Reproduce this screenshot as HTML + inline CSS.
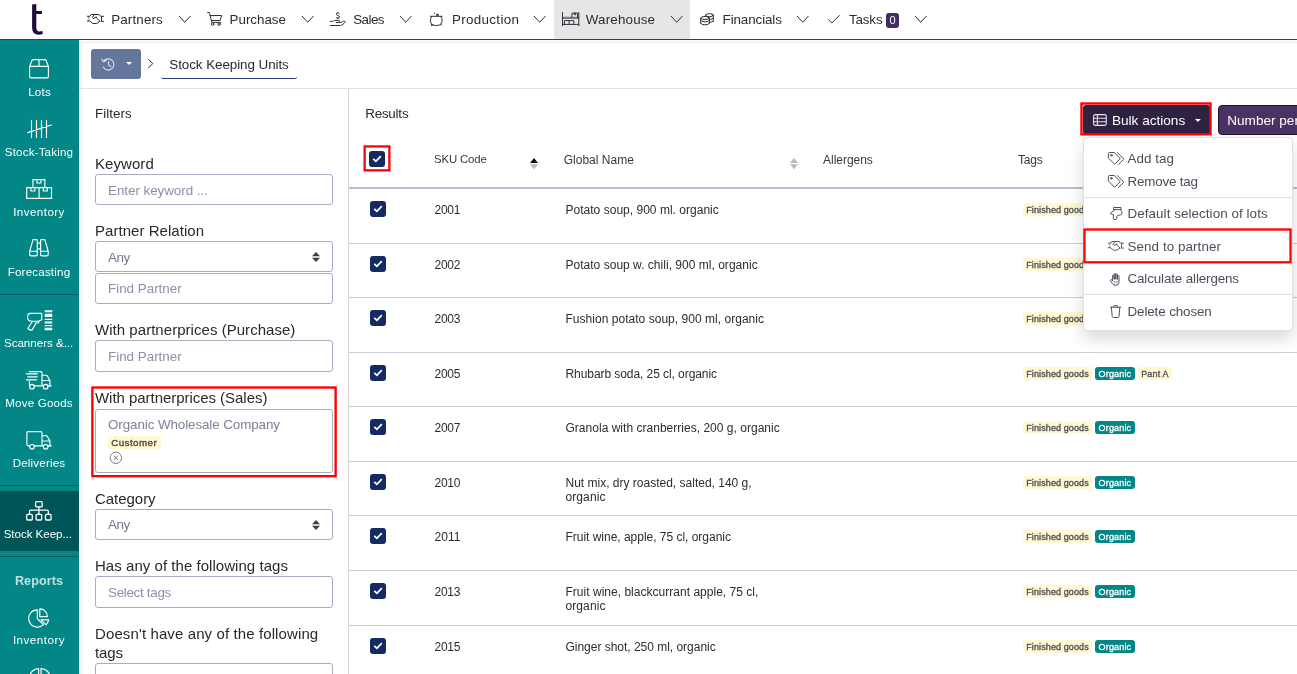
<!DOCTYPE html>
<html><head><meta charset="utf-8"><title>SKU</title>
<style>
*{box-sizing:border-box;margin:0;padding:0}
html,body{width:1297px;height:674px;overflow:hidden;background:#fff;font-family:"Liberation Sans",sans-serif;color:#2e2a33}
body{position:relative}
.a{position:absolute;white-space:nowrap}
svg{position:absolute;overflow:visible}
.ic{fill:none;stroke:#33303a;stroke-width:1;stroke-linecap:round;stroke-linejoin:round}
.iw{fill:none;stroke:#fff;stroke-width:1.15;stroke-linecap:round;stroke-linejoin:round}
.ig{fill:none;stroke:#4e505c;stroke-width:1;stroke-linecap:round;stroke-linejoin:round}
.nt{top:0;height:39px;line-height:39px;font-size:13.4px;color:#2e2b34}
.st{left:0;width:78px;text-align:center;color:#fff;font-size:11.6px;height:14px;line-height:14px}
.lbl{left:95px;font-size:15px;color:#2b2730;height:18px;line-height:18px}
.inp{left:95px;width:238px;height:31px;border:1px solid #a8acc0;border-radius:3px;background:#fff;font-size:13.4px;color:#8a90a7;line-height:29px;padding-left:12px}
.rb{left:349px;width:948px;height:1px;background:#cbced9}
.c{font-size:12px;color:#2e2a33;height:14px;line-height:14px}
.cb{width:16px;height:16px;border-radius:3px;background:#142a62}
.ty{height:13px;background:#fef9d2;border-radius:3px;font-size:9px;line-height:14.4px;color:#4c4b55;padding:0;text-align:center;font-weight:400;-webkit-text-stroke:0.3px #4c4b55;overflow:hidden}
.tg{height:13px;background:#028686;border-radius:3px;font-size:9px;line-height:14.4px;color:#fff;padding:0;text-align:center;font-weight:400;-webkit-text-stroke:0.3px #fff;overflow:hidden}
.dd{font-size:13.4px;color:#4b4d5a;height:16px;line-height:16px;left:1127.5px}
</style></head><body>
<div id="w" style="position:absolute;left:0;top:0;width:1297px;height:674px;will-change:transform;overflow:hidden">
<div class="a" style="left:0;top:0;width:1297px;height:39px;background:#fff"></div>
<div class="a" style="left:554px;top:0;width:136px;height:39px;background:#e6e6e6"></div>
<div class="a" style="left:0;top:39px;width:1297px;height:1px;background:#04585a"></div>
<svg style="left:0;top:0" width="80" height="39"><path fill="#200b38" d="M32.1,4.5L36.3,3.9V11H41.9V13.9H36.3V27.2Q36.3,31.4 39.6,31.4Q41,31.4 42.2,30.8L42.9,33.8Q41,34.8 38.8,34.8Q32.1,34.8 32.1,27.6Z"/></svg>
<div class="a nt" id="n_Partners" style="letter-spacing:0.14px;left:111.2px">Partners</div>
<svg style="left:178.7px;top:16.3px" width="11.5" height="7.3"><path class="ic" d="M0.3,0.3L5.75,6.3L11.2,0.3"/></svg>
<div class="a nt" id="n_Purchase" style="letter-spacing:-0.03px;left:229.6px">Purchase</div>
<svg style="left:301.5px;top:16.3px" width="11.5" height="7.3"><path class="ic" d="M0.3,0.3L5.75,6.3L11.2,0.3"/></svg>
<div class="a nt" id="n_Sales" style="letter-spacing:-0.53px;left:353.2px">Sales</div>
<svg style="left:400.4px;top:16.3px" width="11.5" height="7.3"><path class="ic" d="M0.3,0.3L5.75,6.3L11.2,0.3"/></svg>
<div class="a nt" id="n_Production" style="letter-spacing:0.32px;left:452px">Production</div>
<svg style="left:533.8px;top:16.3px" width="11.5" height="7.3"><path class="ic" d="M0.3,0.3L5.75,6.3L11.2,0.3"/></svg>
<div class="a nt" id="n_Warehouse" style="letter-spacing:0.16px;left:585.8px">Warehouse</div>
<svg style="left:671px;top:16.3px" width="11.5" height="7.3"><path class="ic" d="M0.3,0.3L5.75,6.3L11.2,0.3"/></svg>
<div class="a nt" id="n_Financials" style="letter-spacing:-0.11px;left:722.6px">Financials</div>
<svg style="left:797.4px;top:16.3px" width="11.5" height="7.3"><path class="ic" d="M0.3,0.3L5.75,6.3L11.2,0.3"/></svg>
<div class="a nt" id="n_Tasks" style="letter-spacing:-0.16px;left:849px">Tasks</div>
<svg style="left:914.8px;top:16.3px" width="11.5" height="7.3"><path class="ic" d="M0.3,0.3L5.75,6.3L11.2,0.3"/></svg>
<div class="a" style="left:886px;top:13px;width:13px;height:14.5px;border-radius:3px;background:#432a63;color:#fff;font-size:11px;font-weight:400;text-align:center;line-height:14.5px">0</div>
<svg style="left:87px;top:14px" width="17" height="10"><path class="ic" d="M4.4,0.5H11.8M4.4,0.5L2.9,2.3H0.3M0.3,7H2.9L5.9,9.5H9.8L12.7,7.5M11.8,0.5L13.6,2.3H16.7M14.5,2.3V7.4H16.7M7.4,0.9Q5.2,2 5.5,3.6Q5.9,4.8 7.1,4.2L9.2,3.4M9.3,3.5L13,7.5"/><path class="ic" style="opacity:.55" d="M1.9,2.3V7"/><circle cx="9.1" cy="3.3" r="0.8" fill="#33303a"/></svg>
<svg style="left:207px;top:12px" width="16" height="14"><path class="ic" d="M0.6,0.6h1.8l2.4,9.8h8.8M3.2,3.5h11.4l-1.5,5h-8.7"/><circle class="ic" cx="5.6" cy="12.1" r="1.3"/><circle class="ic" cx="12.1" cy="12.1" r="1.3"/></svg>
<svg style="left:330px;top:12px" width="16" height="14"><path class="ic" d="M0.3,9.4H2.6Q3.4,9.4 3.9,8.9Q4.4,8.4 5.2,8.4H8.8Q9.6,8.4 9.6,9.4V10.4M6.3,10.4H11.7L13.3,9.1Q14.4,8.5 14.9,9.5Q15.2,10.3 14.4,11L11.7,13.2Q11.2,13.5 10.6,13.5H0.3"/><path class="ic" d="M9.3,1.5Q8.6,0.9 7.6,0.9Q6.2,1.1 6.3,2.2Q6.4,3.1 7.8,3.5Q9.6,3.9 9.6,4.9Q9.6,6 8,6.1Q6.8,6.2 6.2,5.5M7.7,0.2V0.9M7.7,6.1V6.9"/></svg>
<svg style="left:430px;top:12px" width="13" height="14"><path class="ic" d="M0.3,4.3H12M1.7,4.5Q0.2,6.5 0.4,9.2Q0.7,12 3,13Q6.2,14.2 9.4,13Q11.8,12 12.1,9.2Q12.3,6.5 10.8,4.5M1.6,12.2L1.3,13.7L2.8,13M10.9,12.2L11.3,13.3M6.3,2.7Q7.4,0.7 8.6,2.7ZM7.4,2.7V4.3"/><circle cx="4.5" cy="1.2" r="0.6" fill="#33303a"/></svg>
<svg style="left:562px;top:12px" width="18" height="14"><rect x="0.5" y="5.2" width="16.3" height="1.3" fill="#c4c4c8" stroke="#4a4850" stroke-width="0.7"/><path class="ic" stroke-width="0.95" d="M0.5,0.5v13.2M16.8,0.5v13.2M0.5,12.4h16.3M2.4,12.4v-3.8h9.4v3.8M7.1,8.6v3.8M9.9,5.2v-4.1h5.6v4.1M12.2,1.1v1.6h1.4v-1.6"/></svg>
<svg style="left:699.5px;top:12.5px" width="15" height="13"><g class="ic" stroke-width="0.95"><ellipse cx="9.5" cy="2.2" rx="3.8" ry="1.5"/><path d="M13.3,2.2V8.3M13.3,5.2Q12.6,6.4 9.7,6.5M13.3,8.2Q12.4,9.3 9.7,9.3M5.7,2.2V3.5"/><ellipse cx="5" cy="5" rx="4.3" ry="1.5"/><path d="M0.7,5V10.3M9.3,5V10.3M0.7,7.3Q0.9,8.9 5,8.9Q9.1,8.9 9.3,7.3M0.7,10.2Q0.9,11.9 5,11.9Q9.1,11.9 9.3,10.2"/></g></svg>
<svg style="left:827.5px;top:15px" width="12" height="9"><path class="ic" stroke-width="1.25" d="M0.5,4.6l3.3,3.5l7.6,-7.6"/></svg>
<div class="a" style="left:0;top:40px;width:79px;height:634px;background:#028686"></div>
<div class="a" style="left:0;top:294px;width:79px;height:1px;background:#005e60"></div>
<div class="a" style="left:0;top:485px;width:79px;height:1px;background:#005e60"></div>
<div class="a" style="left:0;top:491px;width:79px;height:60px;background:#005558"></div>
<div class="a" style="left:0;top:556px;width:79px;height:1px;background:#005e60"></div>
<div class="a st" id="s0" style="letter-spacing:0.23px;top:84.8px;left:0.6px">Lots</div>
<div class="a st" id="s1" style="letter-spacing:0.17px;top:144.8px;left:0px">Stock-Taking</div>
<div class="a st" id="s2" style="letter-spacing:0.45px;top:204.8px;left:0px">Inventory</div>
<div class="a st" id="s3" style="letter-spacing:0.18px;top:264.8px;left:0px">Forecasting</div>
<div class="a st" id="s4" style="letter-spacing:-0.02px;top:335.8px;left:-0.4px">Scanners &amp;...</div>
<div class="a st" id="s5" style="letter-spacing:0.18px;top:395.8px;left:0px">Move Goods</div>
<div class="a st" id="s6" style="letter-spacing:0.17px;top:455.8px;left:0px">Deliveries</div>
<div class="a st" id="s7" style="letter-spacing:-0.05px;top:526.8px;left:-1.2px">Stock Keep...</div>
<div class="a st" id="s8" style="letter-spacing:0.50px;top:633.3px;left:0px">Inventory</div>
<div class="a st" id="srep" style="letter-spacing:0.08px;top:573.5px;font-weight:700;font-size:12.6px;color:#bfe0df">Reports</div>
<svg style="left:29px;top:59.3px" width="20" height="20"><path class="iw" transform="scale(1,0.975)" d="M0.6,7.6v10.3q0,1.4 1.4,1.4h16q1.4,0 1.4,-1.4v-10.3zM0.6,7.6l2.3,-6q0.4,-1 1.5,-1h11.2q1.1,0 1.5,1l2.3,6M10,0.6v7"/></svg>
<svg style="left:27px;top:119.5px" width="25" height="18"><path class="iw" stroke-width="1.3" d="M4.5,0.4v17M9.5,0.4v17M14.5,0.4v17M19.5,0.4v17M0.6,12.6l23.8,-7.6"/></svg>
<svg style="left:26px;top:178.5px" width="26" height="20"><path class="iw" d="M6.9,8.6v-8h12v8M0.7,8.6h12.4v10.8h-12.4zM13.1,8.6h12.4v10.8h-12.4zM10.9,0.6v3.4h4v-3.4M4.9,8.6v3.4h4v-3.4M17.3,8.6v3.4h4v-3.4"/></svg>
<svg style="left:29px;top:239.3px" width="21" height="18"><path class="iw" transform="scale(0.975,0.97)" d="M3.9,1.4q0,-0.8 0.8,-0.8h3q0.8,0 0.8,0.8M11.9,1.4q0,-0.8 0.8,-0.8h3q0.8,0 0.8,0.8M3.9,1.4l-3.2,11.2v3.4q0,1.4 1.4,1.4h5q1.4,0 1.4,-1.4v-14.6M16.5,1.4l3.2,11.2v3.4q0,1.4 -1.4,1.4h-5q-1.4,0 -1.4,-1.4v-14.6M0.7,12.6h7.8M11.9,12.6h7.8M8.5,4.2h3.4M8.5,10.2h3.4"/></svg>
<svg style="left:26.5px;top:309.5px" width="26" height="21"><path class="iw" d="M3.4,3.4h11.3v6.3l-3.6,1.5h-6.6q-3.9,0 -3.9,-3.9q0,-3.9 2.8,-3.9M5.6,11.2l-4.4,6.6q-0.5,0.9 0.4,1.3l2.3,1q0.9,0.3 1.4,-0.5l3.9,-6.6M8.2,13h2.6q1.2,0 1.2,-1.2v-0.9"/><path fill="#fff" d="M17.7,0.2h7.5v2.1h-7.5zM17.7,3.7h7.5v3.4h-7.5zM17.7,8.7h7.5v1.2h-7.5zM17.7,11.5h7.5v2.1h-7.5zM17.7,15.1h7.5v1.1h-7.5zM17.7,17.8h7.5v2.5h-7.5z"/></svg>
<svg style="left:26px;top:370.5px" width="26" height="19"><path class="iw" d="M3.4,0.6h11.4q1.2,0 1.2,1.2v13h-7.9M3.4,10.6v3q0,1.2 0.6,1.2M16,4.2h4q0.8,0 1.2,0.7l2.7,4.6v5.3h-1.9M16,9.5h7.9M17.4,14.8h-1.4M0.5,2.8h10.8M1.7,5.8h9.6M0.5,8.8h10.2"/><circle class="iw" cx="6" cy="15.7" r="2.3"/><circle class="iw" cx="19.7" cy="15.7" r="2.3"/><path class="iw" d="M23.9,14.8h1.4"/></svg>
<svg style="left:26px;top:430.5px" width="26" height="19"><path class="iw" d="M3.7,14.8h-1.6q-1.2,0 -1.2,-1.2v-11.8q0,-1.2 1.2,-1.2h12.7q1.2,0 1.2,1.2v13h-7.7M16,4.6h4q0.8,0 1.2,0.7l2.7,4.6v4.9h-1.9M16,10h7.9M17.4,14.8h-1.4"/><circle class="iw" cx="6" cy="15.8" r="2.3"/><circle class="iw" cx="19.7" cy="15.8" r="2.3"/><path class="iw" d="M23.9,14.8h1.4"/></svg>
<svg style="left:26px;top:500.5px" width="26" height="20"><g stroke-width="1.3"><rect class="iw" style="stroke-width:1.3" x="9.6" y="0.7" width="6.6" height="5.2" rx="1"/><rect class="iw" style="stroke-width:1.3" x="0.7" y="13.4" width="5.6" height="5.6" rx="1"/><rect class="iw" style="stroke-width:1.3" x="10.1" y="13.4" width="5.6" height="5.6" rx="1"/><rect class="iw" style="stroke-width:1.3" x="19.5" y="13.4" width="5.6" height="5.6" rx="1"/><path class="iw" style="stroke-width:1.3" d="M12.9,5.9v7.5M3.5,13.4v-3q0,-1.2 1.2,-1.2h16.4q1.2,0 1.2,1.2v3"/></g></svg>
<svg style="left:28px;top:607.5px" width="22" height="20"><path class="iw" d="M9.3,1.9A8.6,8.6 0 1 0 15.4,16.6L9.3,10.5zM11.8,0.9v7.7h7.6A7.6,7.6 0 0 0 11.8,0.9zM13.1,11.8h7.6q-0.7,2.8 -2.7,5z"/></svg>
<svg style="left:29.5px;top:667.7px" width="20" height="20"><path class="iw" d="M8.6,0.6a9,9 0 0 0 0,18zM11,0.6a9,9 0 0 1 0,18z"/></svg>
<div class="a" style="left:79px;top:40px;width:1218px;height:48px;background:#fff"></div>
<div class="a" style="left:80px;top:41px;width:1217px;height:4px;background:linear-gradient(#f1f1f1,#fff)"></div>
<div class="a" style="left:80px;top:41px;width:4px;height:633px;background:linear-gradient(90deg,#f0f0f1,rgba(255,255,255,0))"></div>
<div class="a" style="left:79px;top:88px;width:1218px;height:1px;background:#e1e1e9"></div>
<div class="a" style="left:91px;top:49px;width:50px;height:30px;border-radius:3px;background:#65779c"></div>
<svg style="left:100.5px;top:57.5px" width="14" height="13"><path fill="none" stroke="#dfe3ee" stroke-width="1.1" stroke-linecap="round" stroke-linejoin="round" d="M2.6,3.4a5.6,5.6 0 1 1 -0.3,5.6M0.8,1.2l1.6,2.6l2.8,-1M7.6,3.6v3.2l2.2,1.9"/></svg>
<svg style="left:126px;top:61.8px" width="6" height="4"><path fill="#fff" d="M0,0h6l-3,3.1z"/></svg>
<svg style="left:148px;top:59px" width="6" height="10"><path class="ic" stroke="#4b4a55" d="M0.5,0.5l4.3,4.1l-4.3,4.1"/></svg>
<div class="a" id="sku" style="letter-spacing:-0.06px;left:169.3px;top:57px;height:16px;line-height:16px;font-size:13.4px;color:#2b2730">Stock Keeping Units</div>
<svg style="left:0;top:0" width="400" height="100"><path d="M161.4,77.5q0.2,1 1.2,1h132.9q1,0 1.2,-1" fill="none" stroke="#2a397a" stroke-width="1"/></svg>
<div class="a" style="left:348px;top:89px;width:1px;height:585px;background:#d3d4de"></div>
<div class="a" id="fil" style="letter-spacing:0.04px;left:95px;top:105.5px;font-size:13.4px;height:16px;line-height:16px;color:#2b2730">Filters</div>
<div class="a lbl" id="l0" style="letter-spacing:0.07px;top:155px">Keyword</div>
<div class="a inp" style="top:174px;height:31px;line-height:31px"><span id="p0" style="letter-spacing:-0.04px">Enter keyword ...</span></div>
<div class="a lbl" id="l1" style="letter-spacing:0.04px;top:222px">Partner Relation</div>
<div class="a inp" style="top:241px;height:31px;line-height:31px;color:#737990"><span id="p1" style="letter-spacing:-0.49px">Any</span></div>
<svg style="left:312.2px;top:252.2px" width="8" height="10"><path fill="#3a3d4a" d="M4,0l4,4.3h-8zM4,10l4,-4.3h-8z"/></svg>
<div class="a inp" style="top:273px;height:31px;line-height:29px"><span id="p2">Find Partner</span></div>
<div class="a lbl" id="l2" style="letter-spacing:0.04px;top:321px">With partnerprices (Purchase)</div>
<div class="a inp" style="top:340px;height:32px;line-height:32px"><span id="p3">Find Partner</span></div>
<div class="a lbl" id="l3" style="letter-spacing:-0.04px;top:389px">With partnerprices (Sales)</div>
<div class="a inp" style="top:409px;height:64px"></div>
<div class="a" id="owc" style="letter-spacing:-0.09px;left:108px;top:416.5px;font-size:13.4px;height:16px;line-height:16px;color:#7c8297">Organic Wholesale Company</div>
<div class="a ty" style="left:107.7px;top:435.5px;width:53px;height:13px;color:#4a4840;-webkit-text-stroke:0.35px #4a4840;font-size:9.8px"><span id="cust" style="letter-spacing:0.43px">Customer</span></div>
<svg style="left:109px;top:451px" width="14" height="14"><circle cx="6.8" cy="6.8" r="5.7" fill="none" stroke="#6a6e80" stroke-width="0.9"/><path d="M4.7,4.7l4.2,4.2M8.9,4.7l-4.2,4.2" stroke="#6a6e80" stroke-width="0.9" fill="none"/></svg>
<div class="a lbl" id="l4" style="letter-spacing:-0.04px;top:490px">Category</div>
<div class="a inp" style="top:509px;height:31px;line-height:29px;color:#737990"><span id="p4" style="letter-spacing:-0.49px">Any</span></div>
<svg style="left:312.2px;top:520.2px" width="8" height="10"><path fill="#3a3d4a" d="M4,0l4,4.3h-8zM4,10l4,-4.3h-8z"/></svg>
<div class="a lbl" id="l5" style="letter-spacing:0.04px;top:557px">Has any of the following tags</div>
<div class="a inp" style="top:576px;height:32px;line-height:31px"><span id="p5" style="letter-spacing:-0.30px">Select tags</span></div>
<div class="a lbl" id="l6" style="letter-spacing:0.11px;top:625px">Doesn't have any of the following</div>
<div class="a lbl" id="l7" style="letter-spacing:-0.15px;top:644px">tags</div>
<div class="a inp" style="top:663px"></div>
<div class="a" id="res" style="letter-spacing:-0.21px;left:365.2px;top:105.5px;font-size:13.4px;height:16px;line-height:16px;color:#2b2730">Results</div>
<div class="a" style="left:349px;top:187px;width:948px;height:2px;background:#b9bdd0"></div>
<div class="a c" id="h0" style="letter-spacing:-0.14px;top:152.4px;left:434px;color:#3a3740;font-size:11.4px">SKU Code</div>
<div class="a c" id="h1" style="letter-spacing:0.01px;top:153px;left:563.7px;color:#3a3740">Global Name</div>
<div class="a c" id="h2" style="letter-spacing:-0.02px;top:153px;left:823px;color:#3a3740">Allergens</div>
<div class="a c" id="h3" style="letter-spacing:-0.16px;top:153px;left:1018px;color:#3a3740">Tags</div>
<svg style="left:530.2px;top:157.5px" width="8" height="12"><path fill="#111" d="M4,0l4,5h-8z"/><path fill="#b9b9c2" d="M4,11.3l4,-5h-8z"/></svg>
<svg style="left:789.5px;top:157.5px" width="8" height="12"><path fill="#b9b9c2" d="M4,0l4,5h-8z"/><path fill="#b9b9c2" d="M4,11.3l4,-5h-8z"/></svg>
<div class="a cb" style="left:369px;top:151px"><svg style="left:0;top:0" width="16" height="16"><path d="M4.9,8.4l2,1.9l4.3,-4.6" fill="none" stroke="#fff" stroke-width="1.8" stroke-linecap="square" stroke-linejoin="miter"/></svg></div>
<div class="a cb" style="left:370px;top:201px"><svg style="left:0;top:0" width="16" height="16"><path d="M4.9,8.4l2,1.9l4.3,-4.6" fill="none" stroke="#fff" stroke-width="1.8" stroke-linecap="square" stroke-linejoin="miter"/></svg></div>
<div class="a c" id="r0c" style="letter-spacing:-0.26px;left:434.5px;top:203px">2001</div>
<div class="a c" id="r0n0" style="letter-spacing:0.02px;left:565.5px;top:203px">Potato soup, 900 ml. organic</div>
<div class="a ty" style="left:1023.2px;width:68.7px;top:203px"><span id="r0t0" style="letter-spacing:0.11px">Finished goods</span></div>
<div class="a cb" style="left:370px;top:256px"><svg style="left:0;top:0" width="16" height="16"><path d="M4.9,8.4l2,1.9l4.3,-4.6" fill="none" stroke="#fff" stroke-width="1.8" stroke-linecap="square" stroke-linejoin="miter"/></svg></div>
<div class="a c" id="r1c" style="letter-spacing:-0.26px;left:434.5px;top:258px">2002</div>
<div class="a c" id="r1n0" style="letter-spacing:0.02px;left:565.5px;top:258px">Potato soup w. chili, 900 ml, organic</div>
<div class="a ty" style="left:1023.2px;width:68.7px;top:258px"><span id="r1t0" style="letter-spacing:0.11px">Finished goods</span></div>
<div class="a rb" style="top:243px"></div>
<div class="a cb" style="left:370px;top:310px"><svg style="left:0;top:0" width="16" height="16"><path d="M4.9,8.4l2,1.9l4.3,-4.6" fill="none" stroke="#fff" stroke-width="1.8" stroke-linecap="square" stroke-linejoin="miter"/></svg></div>
<div class="a c" id="r2c" style="letter-spacing:-0.26px;left:434.5px;top:312px">2003</div>
<div class="a c" id="r2n0" style="letter-spacing:0.03px;left:565.5px;top:312px">Fushion potato soup, 900 ml, organic</div>
<div class="a ty" style="left:1023.2px;width:68.7px;top:312px"><span id="r2t0" style="letter-spacing:0.11px">Finished goods</span></div>
<div class="a rb" style="top:297px"></div>
<div class="a cb" style="left:370px;top:365px"><svg style="left:0;top:0" width="16" height="16"><path d="M4.9,8.4l2,1.9l4.3,-4.6" fill="none" stroke="#fff" stroke-width="1.8" stroke-linecap="square" stroke-linejoin="miter"/></svg></div>
<div class="a c" id="r3c" style="letter-spacing:-0.26px;left:434.5px;top:367px">2005</div>
<div class="a c" id="r3n0" style="letter-spacing:-0.07px;left:565.5px;top:367px">Rhubarb soda, 25 cl, organic</div>
<div class="a ty" style="left:1023.2px;width:68.7px;top:367px"><span id="r3t0" style="letter-spacing:0.11px">Finished goods</span></div>
<div class="a tg" style="left:1094.9px;width:40px;top:367px"><span id="r3t1" style="letter-spacing:0.16px">Organic</span></div>
<div class="a ty" style="left:1137.9px;width:34.1px;top:367px"><span id="r3t2" style="letter-spacing:0.16px">Pant A</span></div>
<div class="a rb" style="top:352px"></div>
<div class="a cb" style="left:370px;top:419px"><svg style="left:0;top:0" width="16" height="16"><path d="M4.9,8.4l2,1.9l4.3,-4.6" fill="none" stroke="#fff" stroke-width="1.8" stroke-linecap="square" stroke-linejoin="miter"/></svg></div>
<div class="a c" id="r4c" style="letter-spacing:-0.26px;left:434.5px;top:421px">2007</div>
<div class="a c" id="r4n0" style="letter-spacing:0.02px;left:565.5px;top:421px">Granola with cranberries, 200 g, organic</div>
<div class="a ty" style="left:1023.2px;width:68.7px;top:421px"><span id="r4t0" style="letter-spacing:0.11px">Finished goods</span></div>
<div class="a tg" style="left:1094.9px;width:40px;top:421px"><span id="r4t1" style="letter-spacing:0.16px">Organic</span></div>
<div class="a rb" style="top:406px"></div>
<div class="a cb" style="left:370px;top:474px"><svg style="left:0;top:0" width="16" height="16"><path d="M4.9,8.4l2,1.9l4.3,-4.6" fill="none" stroke="#fff" stroke-width="1.8" stroke-linecap="square" stroke-linejoin="miter"/></svg></div>
<div class="a c" id="r5c" style="letter-spacing:-0.26px;left:434.5px;top:476px">2010</div>
<div class="a c" id="r5n0" style="left:565.5px;top:476px">Nut mix, dry roasted, salted, 140 g,</div>
<div class="a c" id="r5n1" style="letter-spacing:0.09px;left:565.5px;top:490px">organic</div>
<div class="a ty" style="left:1023.2px;width:68.7px;top:476px"><span id="r5t0" style="letter-spacing:0.11px">Finished goods</span></div>
<div class="a tg" style="left:1094.9px;width:40px;top:476px"><span id="r5t1" style="letter-spacing:0.16px">Organic</span></div>
<div class="a rb" style="top:461px"></div>
<div class="a cb" style="left:370px;top:528px"><svg style="left:0;top:0" width="16" height="16"><path d="M4.9,8.4l2,1.9l4.3,-4.6" fill="none" stroke="#fff" stroke-width="1.8" stroke-linecap="square" stroke-linejoin="miter"/></svg></div>
<div class="a c" id="r6c" style="letter-spacing:0.02px;left:434.5px;top:530px">2011</div>
<div class="a c" id="r6n0" style="letter-spacing:-0.02px;left:565.5px;top:530px">Fruit wine, apple, 75 cl, organic</div>
<div class="a ty" style="left:1023.2px;width:68.7px;top:530px"><span id="r6t0" style="letter-spacing:0.11px">Finished goods</span></div>
<div class="a tg" style="left:1094.9px;width:40px;top:530px"><span id="r6t1" style="letter-spacing:0.16px">Organic</span></div>
<div class="a rb" style="top:515px"></div>
<div class="a cb" style="left:370px;top:583px"><svg style="left:0;top:0" width="16" height="16"><path d="M4.9,8.4l2,1.9l4.3,-4.6" fill="none" stroke="#fff" stroke-width="1.8" stroke-linecap="square" stroke-linejoin="miter"/></svg></div>
<div class="a c" id="r7c" style="letter-spacing:-0.26px;left:434.5px;top:585px">2013</div>
<div class="a c" id="r7n0" style="letter-spacing:0.02px;left:565.5px;top:585px">Fruit wine, blackcurrant apple, 75 cl,</div>
<div class="a c" id="r7n1" style="letter-spacing:0.09px;left:565.5px;top:599px">organic</div>
<div class="a ty" style="left:1023.2px;width:68.7px;top:585px"><span id="r7t0" style="letter-spacing:0.11px">Finished goods</span></div>
<div class="a tg" style="left:1094.9px;width:40px;top:585px"><span id="r7t1" style="letter-spacing:0.16px">Organic</span></div>
<div class="a rb" style="top:570px"></div>
<div class="a cb" style="left:370px;top:638px"><svg style="left:0;top:0" width="16" height="16"><path d="M4.9,8.4l2,1.9l4.3,-4.6" fill="none" stroke="#fff" stroke-width="1.8" stroke-linecap="square" stroke-linejoin="miter"/></svg></div>
<div class="a c" id="r8c" style="letter-spacing:-0.26px;left:434.5px;top:640px">2015</div>
<div class="a c" id="r8n0" style="letter-spacing:-0.02px;left:565.5px;top:640px">Ginger shot, 250 ml, organic</div>
<div class="a ty" style="left:1023.2px;width:68.7px;top:640px"><span id="r8t0" style="letter-spacing:0.11px">Finished goods</span></div>
<div class="a tg" style="left:1094.9px;width:40px;top:640px"><span id="r8t1" style="letter-spacing:0.16px">Organic</span></div>
<div class="a rb" style="top:625px"></div>
<div class="a" style="left:1082.5px;top:105px;width:127.5px;height:28.5px;border-radius:3px;background:#2f2140"></div>
<svg style="left:1093px;top:114px" width="14" height="12"><rect x="0.6" y="0.6" width="12.6" height="10.8" rx="1.6" fill="none" stroke="#e8e4ee" stroke-width="1.1"/><path d="M0.6,4.2h12.6M0.6,7.8h12.6M4.4,0.6v10.8" fill="none" stroke="#e8e4ee" stroke-width="1.1"/></svg>
<div class="a" id="bulk" style="letter-spacing:-0.01px;left:1112px;top:113px;height:16px;line-height:16px;font-size:13.6px;color:#fff">Bulk actions</div>
<svg style="left:1195.3px;top:119.2px" width="6" height="4"><path fill="#fff" d="M0,0h5.8l-2.9,3z"/></svg>
<div class="a" style="left:1218px;top:105px;width:90px;height:30px;border-radius:4px;background:#4a3362;border:1px solid #1f142b"></div>
<div class="a" id="npp" style="left:1227.2px;top:113px;height:16px;line-height:16px;font-size:13.6px;color:#fff">Number per page</div>
<div class="a" style="left:1083px;top:137px;width:209.5px;height:194px;border-radius:4px;background:#fff;border:1px solid #e0e0e6;box-shadow:0 8px 16px rgba(0,0,0,0.15)"></div>
<div class="a" style="left:1084px;top:197px;width:208px;height:1px;background:#dfe0e6"></div>
<div class="a" style="left:1084px;top:294px;width:208px;height:1px;background:#dfe0e6"></div>
<div class="a dd" id="d0" style="letter-spacing:0.03px;top:151px">Add tag</div>
<div class="a dd" id="d1" style="letter-spacing:-0.19px;top:174.1px">Remove tag</div>
<div class="a dd" id="d2" style="letter-spacing:0.07px;top:206.3px">Default selection of lots</div>
<div class="a dd" id="d3" style="letter-spacing:0.08px;top:239.3px">Send to partner</div>
<div class="a dd" id="d4" style="letter-spacing:-0.13px;top:271.1px">Calculate allergens</div>
<div class="a dd" id="d5" style="letter-spacing:-0.11px;top:304px">Delete chosen</div>
<svg style="left:1108px;top:152px" width="17" height="13"><path class="ig" stroke-width="1.1" d="M0.5,1.2q0,-0.7 0.7,-0.7h5l5.6,5.6q0.5,0.5 0,1l-4.6,4.7q-0.5,0.5 -1,0l-5.7,-5.6zM9.2,0.5l6.2,6.1q0.4,0.5 0,1l-4.8,4.8"/><circle class="ig" cx="3.3" cy="3.3" r="0.9"/></svg>
<svg style="left:1108px;top:175.2px" width="17" height="13"><path class="ig" stroke-width="1.1" d="M0.5,1.2q0,-0.7 0.7,-0.7h5l5.6,5.6q0.5,0.5 0,1l-4.6,4.7q-0.5,0.5 -1,0l-5.7,-5.6zM9.2,0.5l6.2,6.1q0.4,0.5 0,1l-4.8,4.8"/><circle class="ig" cx="3.3" cy="3.3" r="0.9"/></svg>
<svg style="left:1110px;top:207px" width="13" height="13"><rect class="ig" x="4" y="0.5" width="7" height="2.1"/><path class="ig" d="M4.2,2.6V3.7L0.7,5.8Q-0.1,6.5 0.9,7L3.4,7.6V11.2Q3.4,12.7 5,12.7Q6.7,12.7 6.7,11.2V10Q6.7,8.5 8.6,8.3L10.2,8Q12,7.6 12,5.9Q12,4.4 11,3.7V2.6"/></svg>
<svg style="left:1107.9px;top:241.2px" width="17" height="10"><g transform="scale(0.93,0.96)"><path class="ig" stroke-width="1.15" d="M4.4,0.5H11.8M4.4,0.5L2.9,2.3H0.3M0.3,7H2.9L5.9,9.5H9.8L12.7,7.5M11.8,0.5L13.6,2.3H16.7M14.5,2.3V7.4H16.7M7.4,0.9Q5.2,2 5.5,3.6Q5.9,4.8 7.1,4.2L9.2,3.4M9.3,3.5L13,7.5"/><path class="ig" style="opacity:.55" d="M1.9,2.3V7"/><circle cx="9.1" cy="3.3" r="0.8" fill="#4e505c"/></g></svg>
<svg style="left:1110.4px;top:272.7px" width="12" height="13"><path class="ig" d="M2.6,7.4v-4.6q0,-0.8 0.8,-0.8t0.8,0.8v3.4M4.2,5.8v-4.5q0,-0.8 0.8,-0.8t0.8,0.8v4.5M5.8,5.8v-4q0,-0.8 0.8,-0.8t0.8,0.8v4.2M7.4,6v-2.8q0,-0.8 0.8,-0.8t0.8,0.8v5.6q0,3.6 -3.4,3.6q-2.2,0 -3.4,-2l-1.6,-2.6q-0.4,-0.8 0.3,-1.1q0.7,-0.3 1.2,0.4l0.8,1"/><path d="M4.4,8.4v0.1M6,8.4v0.1M7.4,8.4v0.1M5.2,9.8v0.1M6.7,9.8v0.1M4.4,10.8v0.1" stroke="#4e505c" stroke-width="0.7" stroke-linecap="round"/></svg>
<svg style="left:1110.4px;top:304.5px" width="12" height="13"><path class="ig" d="M0.5,2.2h10.2M3.8,2.2v-1q0,-0.7 0.7,-0.7h2.2q0.7,0 0.7,0.7v1M1.4,2.2l0.8,9.2q0.1,1.1 1.2,1.1h4.4q1.1,0 1.2,-1.1l0.8,-9.2"/></svg>
<svg style="left:0;top:0" width="1297" height="674"><rect x="364.65" y="146.45" width="24.7" height="23.9" fill="none" stroke="#ff0000" stroke-width="2.3"/></svg>
<svg style="left:0;top:0" width="1297" height="674"><rect x="92.375" y="387.525" width="243.25" height="88.65" fill="none" stroke="#ff0000" stroke-width="2.35"/></svg>
<svg style="left:0;top:0" width="1297" height="674"><rect x="1081.5" y="103.5" width="129" height="30.8" fill="none" stroke="#ff0000" stroke-width="2.4"/></svg>
<svg style="left:0;top:0" width="1297" height="674"><rect x="1084.45" y="229.5" width="206.1" height="32.8" fill="none" stroke="#ff0000" stroke-width="2.3"/></svg>
</div>
</body></html>
